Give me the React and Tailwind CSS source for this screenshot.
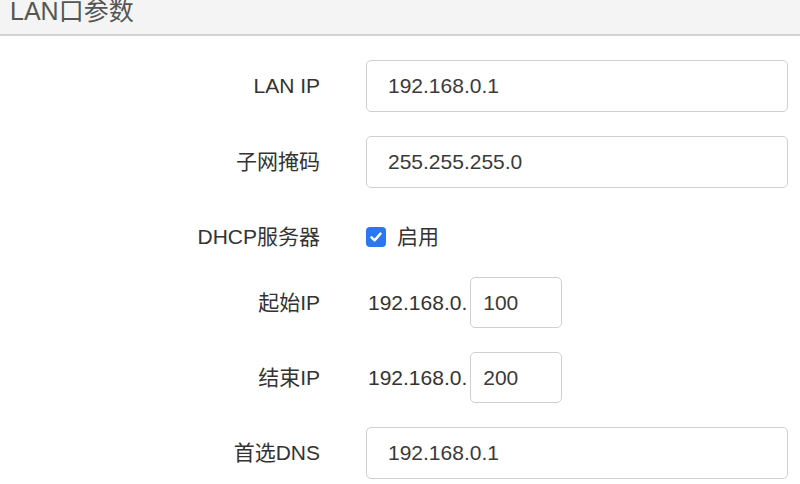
import React from 'react';

const FONT = "font-['Liberation_Sans','Noto_Sans_CJK_SC',sans-serif]";

const Row = ({ label, className, children }) => (
    <div className={`flex items-center ${className}`}>
        <div className="w-[320px] shrink-0 text-right text-[21px] text-[#333]">{label}</div>
        <div className="ml-[46px] flex items-center">{children}</div>
    </div>
);

const TextInput = ({ value, width = 'w-[422px]', pad = 'pl-[21px]' }) => (
    <input
        readOnly
        value={value}
        className={`${width} h-full ${pad} rounded-[5px] border border-[#cfcfcf] bg-white text-[21px] text-[#3a3a3a] outline-none`}
    />
);

const App = () => {
    return (
        <div className={`w-[800px] h-[484px] overflow-hidden bg-white ${FONT}`}>
            {/* header */}
            <div className="h-[36px] bg-[#f4f4f4] border-b-2 border-[#d2d2d2] overflow-hidden">
                <div className="mt-[-1px] pl-[10px] text-[25px] leading-none text-[#555]">LAN口参数</div>
            </div>

            <Row label="LAN IP" className="mt-[24px] h-[52px]">
                <div className="h-[52px] flex"><TextInput value="192.168.0.1" /></div>
            </Row>

            <Row label="子网掩码" className="mt-[24px] h-[52px]">
                <div className="h-[52px] flex"><TextInput value="255.255.255.0" /></div>
            </Row>

            <Row label="DHCP服务器" className="mt-[36px] h-[26px]">
                <span className="w-[20px] h-[20px] rounded-[4px] bg-[#2a76f3] flex items-center justify-center">
                    <svg width="14" height="14" viewBox="0 0 14 14" fill="none">
                        <path d="M2.5 7.3 L5.6 10.4 L11.5 3.6" stroke="white" strokeWidth="2.4" strokeLinecap="round" strokeLinejoin="round" />
                    </svg>
                </span>
                <span className="ml-[11px] text-[21px] text-[#333]">启用</span>
            </Row>

            <Row label="起始IP" className="mt-[27px] h-[51px]">
                <span className="ml-[2px] text-[21px] text-[#333]">192.168.0.</span>
                <div className="ml-[3px] h-[51px] flex"><TextInput value="100" width="w-[92px]" pad="pl-[12px]" /></div>
            </Row>

            <Row label="结束IP" className="mt-[24px] h-[51px]">
                <span className="ml-[2px] text-[21px] text-[#333]">192.168.0.</span>
                <div className="ml-[3px] h-[51px] flex"><TextInput value="200" width="w-[92px]" pad="pl-[12px]" /></div>
            </Row>

            <Row label="首选DNS" className="mt-[24px] h-[52px]">
                <div className="h-[52px] flex"><TextInput value="192.168.0.1" /></div>
            </Row>
        </div>
    );
};

export default App;
